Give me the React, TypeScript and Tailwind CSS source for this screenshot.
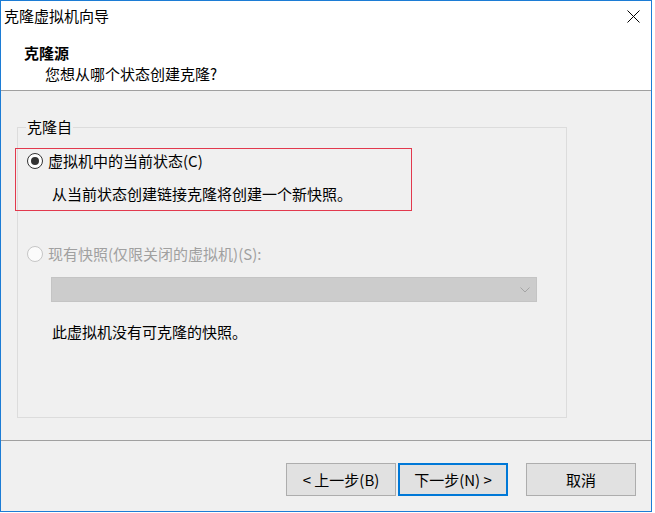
const FONT = { fontFamily: '"Noto Sans CJK SC", "Liberation Sans", sans-serif' };

function Radio({ checked, disabled }: { checked?: boolean; disabled?: boolean }) {
  return (
    <span
      className={
        'flex h-[16px] w-[16px] shrink-0 items-center justify-center rounded-full border ' +
        (disabled ? 'border-[#c6c6c6] bg-[#fbfbfb]' : 'border-[#333333] bg-white')
      }
    >
      {checked && <span className="h-[8px] w-[8px] rounded-full bg-[#333333]" />}
    </span>
  );
}

function WizardButton({ children, primary }: { children: React.ReactNode; primary?: boolean }) {
  return (
    <button
      className={
        'flex h-[33px] w-[110px] items-center justify-center bg-[#e1e1e1] text-[15px] leading-[20px] text-black ' +
        (primary ? 'border-2 border-[#0078d7]' : 'border border-[#adadad]')
      }
    >
      {children}
    </button>
  );
}

export default function App() {
  return (
    <div className="h-[513px] w-[655px] bg-white text-[15px] leading-[20px] text-black" style={FONT}>
      <div className="flex h-[512px] w-[652px] flex-col border border-[#1c7cd5] bg-white">
        {/* Title bar */}
        <div className="flex h-[29px] shrink-0 items-center justify-between pl-[3px] pr-[11px]">
          <span>克隆虚拟机向导</span>
          <svg width="13" height="13" viewBox="0 0 13 13" fill="none" className="mt-[1px]">
            <path d="M0.5 0.5 L12.5 12.5 M12.5 0.5 L0.5 12.5" stroke="#000" strokeWidth="1" />
          </svg>
        </div>

        {/* Header */}
        <div className="h-[60px] shrink-0 pl-[23px] pt-[13px]">
          <div className="font-bold">克隆源</div>
          <div className="mt-[1px] pl-[21px]">您想从哪个状态创建克隆?</div>
        </div>
        <div className="h-px shrink-0 bg-[#a0a0a0]" />

        {/* Body */}
        <div className="h-[349px] shrink-0 bg-[#f0f0f0] pl-[16px] pt-[26px]">
          <fieldset className="m-0 h-[301px] w-[550px] border border-[#dcdcdc] p-0">
            <legend className="ml-[8px] px-[1px] leading-[20px]">克隆自</legend>

            <div className="-ml-[3px] mt-[11px] w-[397px] border border-[#e2394d] pb-[6px] pl-[11px] pt-[2px]">
              <div className="flex h-[20px] items-center gap-[5px]">
                <Radio checked />
                <span>虚拟机中的当前状态(C)</span>
              </div>
              <div className="mt-[13px] pl-[25px]">从当前状态创建链接克隆将创建一个新快照。</div>
            </div>

            <div className="ml-[9px] mt-[33px] flex h-[20px] items-center gap-[5px] text-[#a0a0a0]">
              <Radio disabled />
              <span>现有快照(仅限关闭的虚拟机)(S):</span>
            </div>

            <div className="ml-[33px] mt-[13px] flex h-[25px] w-[486px] items-center justify-end border border-[#c4c4c4] bg-[#cccccc] pr-[6px]">
              <svg width="10" height="6" viewBox="0 0 10 6" fill="none">
                <path d="M0.5 0.5 L5 5 L9.5 0.5" stroke="#a4a4a4" strokeWidth="1" />
              </svg>
            </div>

            <div className="ml-[34px] mt-[20px]">此虚拟机没有可克隆的快照。</div>
          </fieldset>
        </div>
        <div className="h-px shrink-0 bg-[#a0a0a0]" />

        {/* Footer */}
        <div className="flex flex-1 items-start justify-end bg-[#f0f0f0] pr-[15px] pt-[22px]">
          <div className="flex gap-[2px]">
            <WizardButton>&lt; 上一步(B)</WizardButton>
            <WizardButton primary>下一步(N) &gt;</WizardButton>
          </div>
          <div className="ml-[18px]">
            <WizardButton>取消</WizardButton>
          </div>
        </div>
      </div>
    </div>
  );
}
